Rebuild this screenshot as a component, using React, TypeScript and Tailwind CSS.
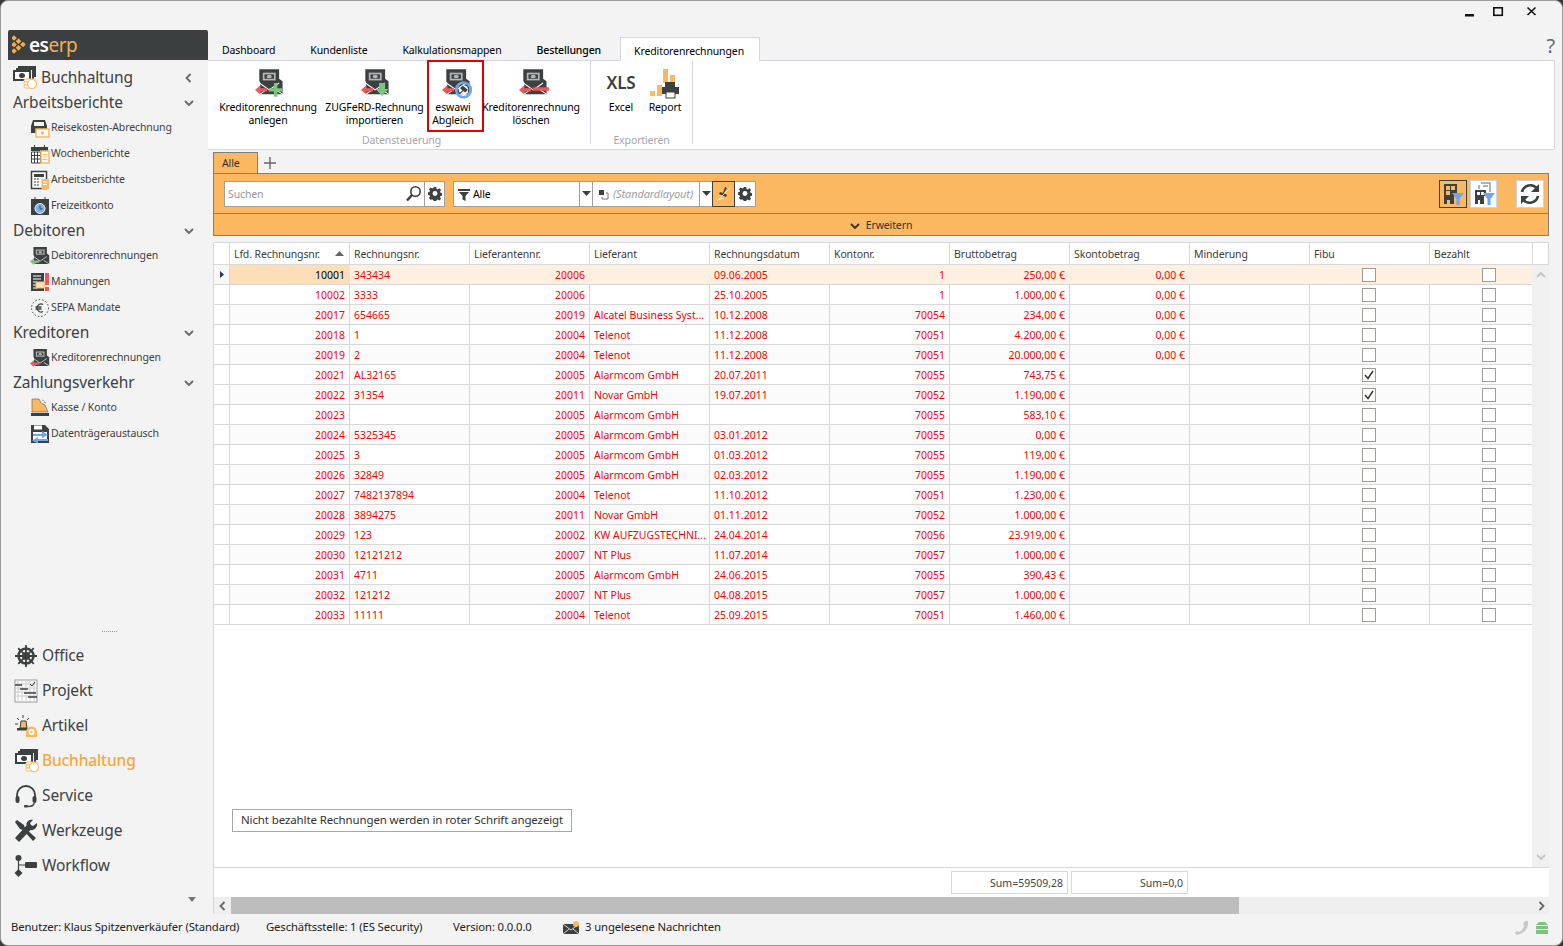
import type { ReactNode } from 'react';

const DARK = '#3b4040';
const ORANGE = '#fbb860';
const BLUE = '#6ea6f5';
const GREEN = '#7cc47f';
const RED = '#f2555a';

function Bills({ color = ORANGE }: { color?: string }) {
  return (
    <svg width="26" height="26" viewBox="0 0 26 26">
      <path d="M6 1h18v11h-2V3H6z" fill={DARK} />
      <path d="M4 3h18v11h-2V5H4z" fill={DARK} />
      <rect x="1" y="5" width="18" height="11" fill={DARK} />
      <rect x="3" y="7" width="14" height="7" fill="#fff" />
      <ellipse cx="10" cy="10.5" rx="3" ry="2.5" fill={DARK} />
      <rect x="12" y="14" width="12" height="3" rx="1.5" fill="#fff" stroke={color} />
      <rect x="12" y="17" width="12" height="3" rx="1.5" fill="#fff" stroke={color} />
      <rect x="12" y="20" width="12" height="3" rx="1.5" fill="#fff" stroke={color} />
      <circle cx="20" cy="19" r="4.5" fill="#fff" stroke={color} />
    </svg>
  );
}

function InvoiceBody({ bg = '#f3f3f3' }: { bg?: string }) {
  return (
    <g>
      <path d="M5 0h23v11l4 3v15H6V15l-1-1z" fill={DARK} />
      <rect x="9" y="4" width="15" height="9" fill="#b5b5b5" />
      <rect x="11" y="6" width="11" height="5" fill={DARK} />
      <ellipse cx="16.5" cy="8.5" rx="3" ry="2" fill="#b5b5b5" />
      <path d="M5 16l11.5 8L28 16" fill="none" stroke={bg} strokeWidth="1.2" />
      <path d="M6 29l8-6M32 29l-9-6" fill="none" stroke={bg} strokeWidth="1.2" />
    </g>
  );
}

function RibbonInvoice({ kind }: { kind: 'add' | 'import' | 'sync' | 'delete' }) {
  return (
    <svg width="31" height="32" viewBox="0 0 36 34" className="ml-[4px]">
      <g transform="translate(0 1)">
        <InvoiceBody bg="#ffffff" />
      </g>
      <path d="M0 25l6-5v3h8v4H6v3z" fill={RED} />
      {kind === 'add' && <path d="M22 17h4v6h6v4h-6v6h-4v-6h-6v-4h6z" fill={GREEN} />}
      {kind === 'import' && <path d="M21 17h7v7h4l-7.5 8L17 24h4z" fill={GREEN} />}
      {kind === 'delete' && <rect x="16" y="22" width="19" height="4" fill={RED} />}
      {kind === 'sync' && (
        <g>
          <circle cx="25" cy="25" r="8.5" fill="none" stroke={BLUE} strokeWidth="3" />
          <circle cx="25" cy="25" r="5.5" fill="#fff" />
          <path d="M21 29l5-5M24 21l5 4-2 2-5-4z" stroke={DARK} strokeWidth="1.5" fill={DARK} />
        </g>
      )}
    </svg>
  );
}

function SmallInvoice({ arrow }: { arrow: string }) {
  return (
    <svg width="20" height="22" viewBox="0 0 36 36">
      <g transform="translate(1 2) scale(1.05)">
        <InvoiceBody />
      </g>
      <path d="M0 28l7-6v4h10v4H7v4z" fill={arrow} />
    </svg>
  );
}

function Cog({ size = 16 }: { size?: number }) {
  return (
    <svg width={size} height={size} viewBox="0 0 16 16">
      <path
        d="M6.6 0h2.800l.4 2.200 1.300.6 1.900-1.300 2 2-1.300 1.900.6 1.300 2.200.4v2.800l-2.200.4-.6 1.300 1.300 1.900-2 2-1.900-1.300-1.300.6-.4 2.200H6.600l-.4-2.200-1.300-.6L3 14.500l-2-2 1.300-1.900-.6-1.300L-.5 8.900V6.100l2.200-.4.6-1.300L1 2.500l2-2 1.900 1.300 1.300-.6z"
        fill={DARK}
      />
      <circle cx="8" cy="7.5" r="2.8" fill="#fff" />
    </svg>
  );
}

function Chevron({ dir, color = '#666' }: { dir: 'left' | 'down' | 'up' | 'right'; color?: string }) {
  const d = {
    left: 'M6.5 1L2.5 5l4 4',
    right: 'M3.5 1l4 4-4 4',
    down: 'M1 3l4 4 4-4',
    up: 'M1 7l4-4 4 4',
  }[dir];
  return (
    <svg width="10" height="10" viewBox="0 0 10 10">
      <path d={d} fill="none" stroke={color} strokeWidth="1.8" />
    </svg>
  );
}

function Caret() {
  return (
    <svg width="9" height="5" viewBox="0 0 9 5">
      <path d="M0 0h9L4.5 5z" fill={DARK} />
    </svg>
  );
}

const sideIcons: Record<string, ReactNode> = {
  reise: (
    <svg width="20" height="20" viewBox="0 0 20 20">
      <path d="M3 2h12l2 6v7H1V8z" fill={DARK} />
      <rect x="4" y="4" width="10" height="4" fill="#f3f3f3" />
      <rect x="6" y="11" width="13" height="8" fill="#fff" stroke={ORANGE} strokeWidth="1.5" />
      <circle cx="12.5" cy="15" r="1.8" fill={ORANGE} />
    </svg>
  ),
  woche: (
    <svg width="20" height="20" viewBox="0 0 20 20">
      <path d="M1 3h17v4H1z" fill={DARK} />
      <path d="M4 1h1v3H4zM14 1h1v3h-1z" fill={DARK} />
      <path d="M1.5 8h9v11h-9zM1.5 11.5h9M1.5 15h9M4.5 8v11M7.5 8v11" fill="#fff" stroke={DARK} />
      <rect x="11" y="7" width="8" height="12" fill="#fff" stroke={ORANGE} strokeWidth="1.5" />
      <path d="M12.5 10.5h5M12.5 13h5M12.5 15.5h5" stroke={ORANGE} />
    </svg>
  ),
  arbeit: (
    <svg width="20" height="20" viewBox="0 0 20 20">
      <rect x="1.5" y="1.5" width="15" height="17" fill="#fff" stroke={DARK} strokeWidth="1.5" />
      <rect x="4" y="4" width="10" height="3" fill={DARK} />
      <path d="M4 9h6M4 12h6M4 15h6" stroke={DARK} strokeDasharray="2 1" />
      <rect x="11.5" y="9" width="7.5" height="10" fill={ORANGE} />
      <path d="M13 12h4M13 14.5h4" stroke="#fff" />
    </svg>
  ),
  frei: (
    <svg width="20" height="20" viewBox="0 0 20 20">
      <rect x="1" y="3" width="18" height="16" fill={DARK} />
      <path d="M4.500 1h1v3h-1zM14.500 1h1v3h-1z" fill={DARK} />
      <circle cx="10" cy="12.5" r="5" fill="#7fb0f0" stroke="#fff" />
      <path d="M10 9.5v3.5h2.500" stroke={DARK} fill="none" />
    </svg>
  ),
  mahn: (
    <svg width="20" height="20" viewBox="0 0 20 20">
      <rect x="1" y="1" width="13" height="18" fill={DARK} />
      <path d="M3 4h8M3 7h8M3 10h4M3 13h4M3 16h4" stroke="#fff" />
      <rect x="6" y="10" width="9" height="6" fill="#fde2bd" stroke={ORANGE} />
      <rect x="15" y="1" width="4" height="12" fill={RED} />
      <rect x="15" y="15" width="4" height="4" fill={RED} />
    </svg>
  ),
  sepa: (
    <svg width="20" height="20" viewBox="0 0 20 20">
      <circle cx="10" cy="10" r="8.5" fill="none" stroke={DARK} strokeDasharray="1.5 2" />
      <path d="M13 6.500a4 4 0 1 0 0 7M5.500 9h6M5.500 11h6" fill="none" stroke={DARK} strokeWidth="1.3" />
    </svg>
  ),
  kasse: (
    <svg width="20" height="20" viewBox="0 0 20 20">
      <path d="M2 1h7l2 4 4 2 3 7H2z" fill={ORANGE} stroke={DARK} strokeWidth=".5" />
      <rect x="1" y="15" width="18" height="3" fill={DARK} />
      <path d="M12 2l2 1M14 4l2 1" stroke="#999" />
    </svg>
  ),
  daten: (
    <svg width="20" height="20" viewBox="0 0 20 20">
      <path d="M1 1h14l4 4v14H1z" fill={DARK} />
      <rect x="4" y="1.5" width="8" height="4" fill="#fff" />
      <rect x="3" y="8" width="14" height="9" fill="#fff" />
      <path d="M3 10h9V7l6 4-6 3v-2H3z" fill={BLUE} />
      <path d="M18 15H8v-2l-6 3.500L8 19.500V17h10z" fill={BLUE} />
    </svg>
  ),
};

const navIcons: Record<string, ReactNode> = {
  Office: (
    <svg width="24" height="24" viewBox="0 0 24 24">
      <circle cx="12" cy="12" r="7.5" fill="none" stroke={DARK} strokeWidth="2.5" />
      <circle cx="12" cy="12" r="4" fill={DARK} />
      <path d="M12 1v22M1 12h22M4.200 4.200l15.600 15.600M19.800 4.200L4.200 19.800" stroke={DARK} strokeWidth="1.8" />
    </svg>
  ),
  Projekt: (
    <svg width="24" height="24" viewBox="0 0 24 24">
      <rect x="1" y="1" width="22" height="22" fill="#fff" stroke="#9a9a9a" />
      <path d="M4 1v22M8 1v22M12 1v22M16 1v22M20 1v22M1 5h22M1 9h22M1 13h22M1 17h22" stroke="#ccc" />
      <path d="M1 6h7M6 10h8M10 14h12M14 18h9" stroke={DARK} strokeWidth="1.6" />
      <path d="M16 5l2 2 3-4" fill="none" stroke={DARK} />
    </svg>
  ),
  Artikel: (
    <svg width="24" height="24" viewBox="0 0 24 24">
      <path d="M7 7h5l1 7H6z" fill={ORANGE} stroke={DARK} />
      <rect x="3" y="14" width="11" height="2.5" fill={DARK} />
      <path d="M9 1v3M3 4l2 2M15 4l-2 2M1 10h3" stroke={DARK} />
      <path d="M13 23v-5a5.500 5.500 0 0 1 11 0v5z" fill={ORANGE} transform="translate(-1 0)" />
      <circle cx="17.5" cy="18" r="3" fill="#fff" />
      <circle cx="17.5" cy="18" r="1.2" fill={ORANGE} />
    </svg>
  ),
  Buchhaltung: <Bills />,
  Service: (
    <svg width="24" height="24" viewBox="0 0 24 24">
      <path d="M3 15v-4a9 9 0 0 1 18 0v4" fill="none" stroke={DARK} strokeWidth="1.8" />
      <rect x="1.5" y="12" width="4" height="7" rx="2" fill={DARK} />
      <rect x="18.5" y="12" width="4" height="7" rx="2" fill={DARK} />
      <path d="M20 19c0 3-3 3.500-6 3.500" fill="none" stroke={DARK} strokeWidth="1.5" />
      <rect x="10" y="21" width="4" height="2.5" rx="1" fill={DARK} />
    </svg>
  ),
  Werkzeuge: (
    <svg width="24" height="24" viewBox="0 0 24 24">
      <path d="M3 1L1 3l5 7 3 1 10 11 3-3L11 9l-1-3z" fill={DARK} />
      <path d="M23 4l-4 3-2-1-1-2 3-3c-4-1-7 2-6.500 5.500L1 19l4 4L16.500 11C20 12 24 8 23 4z" fill={DARK} />
    </svg>
  ),
  Workflow: (
    <svg width="24" height="24" viewBox="0 0 24 24">
      <circle cx="4.500" cy="4" r="3" fill={DARK} />
      <path d="M4.500 6v13M4.500 11H12" stroke={DARK} strokeWidth="1.2" />
      <rect x="11" y="8" width="12" height="6" rx="1" fill={DARK} />
      <path d="M4.500 15l4 4-4 4-4-4z" fill={DARK} />
    </svg>
  ),
};

const groups = [
  {
    title: 'Arbeitsberichte',
    items: [
      ['Reisekosten-Abrechnung', 'reise'],
      ['Wochenberichte', 'woche'],
      ['Arbeitsberichte', 'arbeit'],
      ['Freizeitkonto', 'frei'],
    ],
  },
  {
    title: 'Debitoren',
    items: [
      ['Debitorenrechnungen', 'deb'],
      ['Mahnungen', 'mahn'],
      ['SEPA Mandate', 'sepa'],
    ],
  },
  { title: 'Kreditoren', items: [['Kreditorenrechnungen', 'kred']] },
  {
    title: 'Zahlungsverkehr',
    items: [
      ['Kasse / Konto', 'kasse'],
      ['Datenträgeraustausch', 'daten'],
    ],
  },
];

function Sidebar() {
  return (
    <aside className="w-[207px] shrink-0 flex flex-col pl-[7px] pb-[5px]">
      <div className="h-[30px] bg-[#3b3f3f] rounded-t-[2px] flex items-center pl-[4px] shrink-0">
        <svg width="15" height="20" viewBox="0 0 15 20">
          {[[2, 3], [2, 9.5], [2, 16], [6.5, 6.2], [6.5, 12.8], [11, 9.5]].map(([x, y]) => (
            <rect key={`${x}-${y}`} x={x - 2} y={y - 2} width="4" height="4" fill="#f6a94f" transform={`rotate(45 ${x} ${y})`} />
          ))}
        </svg>
        <span className="ml-[2px] text-[19px] leading-none font-semibold text-white tracking-[-0.5px]">
          es<span className="text-[#f6ad55] font-normal">erp</span>
        </span>
      </div>

      <div className="flex-1 mt-[5px] text-[#3d4242]">
        <div className="h-[25px] flex items-center">
          <span className="ml-[4px] w-[29px]">
            <Bills />
          </span>
          <span className="text-[15.5px] flex-1">Buchhaltung</span>
          <span className="mr-[14px]">
            <Chevron dir="left" />
          </span>
        </div>
        {groups.map(g => (
          <div key={g.title} className="-mb-[1px]">
            <div className="h-[25px] flex items-center pl-[5px]">
              <span className="text-[15.5px] flex-1">{g.title}</span>
              <span className="mr-[14px]">
                <Chevron dir="down" />
              </span>
            </div>
            {g.items.map(([label, icon]) => (
              <div key={label} className="h-[26px] flex items-center pl-[20px] text-[10.5px]">
                <span className="w-[23px] flex justify-center">
                  {icon === 'deb' && <SmallInvoice arrow={GREEN} />}
                  {icon === 'kred' && <SmallInvoice arrow={RED} />}
                  {sideIcons[icon]}
                </span>
                {label}
              </div>
            ))}
          </div>
        ))}
      </div>

      <div className="text-[#3d4242]">
        <div className="h-[3px] mb-[4px] flex justify-center pl-[2px] text-[0px]">
          <span className="w-[15px] border-t border-dotted border-[#999]" />
        </div>
        {['Office', 'Projekt', 'Artikel', 'Buchhaltung', 'Service', 'Werkzeuge', 'Workflow'].map(n => (
          <div key={n} className="h-[35px] flex items-center pl-[6px]">
            <span className="w-[28px] flex">{navIcons[n]}</span>
            <span className={`text-[15.5px] ${n === 'Buchhaltung' ? 'text-[#f9a63a] font-medium' : ''}`}>{n}</span>
          </div>
        ))}
        <div className="h-[20px] mt-[6px] flex justify-end items-center pr-[12px]">
          <svg width="8" height="5" viewBox="0 0 8 5">
            <path d="M0 0h8L4 5z" fill="#777" />
          </svg>
        </div>
      </div>
    </aside>
  );
}

const tabs = ['Dashboard', 'Kundenliste', 'Kalkulationsmappen', 'Bestellungen'];

function RibbonItem({ w, icon, lines, box, textPad = '' }: { w: string; icon: ReactNode; lines: string[]; box?: boolean; textPad?: string }) {
  return (
    <div className={`${w} h-[70px] flex flex-col items-center pt-[3px] text-[10.5px] leading-[13px] text-black text-center ${box ? 'outline-2 -outline-offset-1 outline-[#e60000]' : ''}`}>
      <div className="h-[35px] flex items-end justify-center">{icon}</div>
      <div className={`mt-[2px] whitespace-nowrap ${textPad}`}>{lines[0]}</div>
      <div className={`whitespace-nowrap ${textPad}`}>{lines[1]}</div>
    </div>
  );
}

function Ribbon() {
  return (
    <div className="h-[90px] mr-[7px] bg-white border border-[#d6d6e2] border-l-0 flex pl-[7px] shrink-0">
      <div className="w-[376px] flex flex-col items-center border-r border-[#d6d6e2] mb-[5px]">
        <div className="flex w-full">
          <RibbonItem w="w-[106px]" icon={<RibbonInvoice kind="add" />} lines={['Kreditorenrechnung', 'anlegen']} />
          <RibbonItem w="w-[107px]" icon={<RibbonInvoice kind="import" />} lines={['ZUGFeRD-Rechnung', 'importieren']} />
          <RibbonItem w="w-[55px]" box textPad="pr-[5px]" icon={<RibbonInvoice kind="sync" />} lines={['eswawi', 'Abgleich']} />
          <RibbonItem w="w-[98px]" textPad="pr-[2px]" icon={<RibbonInvoice kind="delete" />} lines={['Kreditorenrechnung', 'löschen']} />
        </div>
        <div className="mt-[2px] text-[10.5px] leading-[14px] text-[#a6a6ae] pr-[2px]">Datensteuerung</div>
      </div>
      <div className="w-[102px] flex flex-col items-center border-r border-[#d6d6e2] mb-[5px]">
        <div className="flex w-full pl-[8px]">
          <RibbonItem
            w="w-[44px]"
            icon={<span className="text-[17px] leading-[28px] font-semibold text-[#3b4040] mb-[2px]">XLS</span>}
            lines={['Excel', '']}
          />
          <RibbonItem
            w="w-[44px]"
            icon={
              <svg width="32" height="32" viewBox="0 0 32 32">
                <path d="M1 24h5v5H1zM8 18h5v11H8zM14 2h5v14h-5zM21 8h5v8h-5z" fill={ORANGE} />
                <rect x="16" y="15" width="10" height="5" fill={DARK} />
                <rect x="13" y="20" width="17" height="7" fill={DARK} />
                <rect x="17" y="25" width="9" height="6" fill="#fff" stroke={DARK} />
              </svg>
            }
            lines={['Report', '']}
          />
        </div>
        <div className="mt-[2px] text-[10.5px] leading-[14px] text-[#a6a6ae]">Exportieren</div>
      </div>
    </div>
  );
}

function Toolbar() {
  return (
    <div className="h-[41px] border border-[#7f7f7f] bg-[#fcb860] flex items-center pl-[10px] pr-[4px]">
      <div className="flex h-[26px] bg-white border border-[#a0a0a0] w-[221px]">
        <div className="flex-1 flex items-center pl-[3px] pt-[2px] text-[10.5px] text-[#999]">Suchen</div>
        <div className="flex items-center pr-[2px]">
          <svg width="17" height="17" viewBox="0 0 17 17">
            <circle cx="10.5" cy="6.5" r="4.7" fill="none" stroke={DARK} strokeWidth="1.6" />
            <path d="M7 10l-5 5.500" stroke={DARK} strokeWidth="2.6" />
          </svg>
        </div>
        <div className="w-[20px] border-l border-[#a0a0a0] flex items-center justify-center">
          <Cog size={14} />
        </div>
      </div>
      <div className="flex h-[26px] ml-[8px] bg-white border border-[#a0a0a0] w-[303px] text-[10.5px]">
        <div className="w-[125px] flex items-center pl-[4px] pt-[2px] text-black">
          <svg width="12" height="12" viewBox="0 0 12 12" className="mr-[3px]">
            <path d="M0 0h12v2H0zM1 3h10L7.5 7v5l-3-1.500V7z" fill={DARK} />
          </svg>
          Alle
        </div>
        <div className="w-[14px] border-x border-[#a0a0a0] flex items-center justify-center">
          <Caret />
        </div>
        <div className="w-[106px] flex items-center pl-[5px] pt-[2px] text-[11px] text-[#a0a0a0] italic whitespace-nowrap overflow-hidden">
          <svg width="11" height="11" viewBox="0 0 11 11" className="mr-[4px] shrink-0">
            <rect x="1" y="1" width="5" height="5" fill={DARK} />
            <path d="M8 4h2v6H4V8" fill="none" stroke="#777" />
          </svg>
          (Standardlayout)
        </div>
        <div className="w-[14px] border-x border-[#a0a0a0] flex items-center justify-center">
          <Caret />
        </div>
        <div className="w-[21px] bg-[#fcb860] outline outline-[#3b4040] flex items-center justify-center">
          <svg width="16" height="16" viewBox="0 0 16 16">
            <path d="M9 1l2 1-3 5 3 2-1 2-7-3 1-2 3 1z" fill={DARK} />
            <path d="M1 15l13-13" stroke="#fff" strokeWidth=".8" />
            <path d="M3 14c2-2 4-1 5-2" stroke="#fff" fill="none" />
          </svg>
        </div>
        <div className="flex-1 flex items-center justify-center">
          <Cog size={14} />
        </div>
      </div>
      <div className="ml-auto flex items-center">
        <div className="w-[28px] h-[28px] border border-[#3b4040] bg-[#fcb860] flex items-center justify-center">
          <svg width="24" height="24" viewBox="0 0 24 24">
            <path d="M3 2h13v12h-3v8H9v-4H6v4H3z" fill={DARK} />
            <path d="M5 4h4v4H5zM10 4h4v4h-4zM5 9h4v4H5z" fill="#fcb860" />
            <path d="M11 11h12l-4.500 6v6h-3v-6z" fill={BLUE} />
          </svg>
        </div>
        <div className="ml-[3px] w-[27px] h-[28px] bg-white border border-[#c8d4ea] flex items-center justify-center">
          <svg width="24" height="24" viewBox="0 0 24 24">
            <path d="M9 1h9v9M7 3v4M11 4h5" fill="none" stroke="#999" strokeWidth="1.5" />
            <path d="M3 8h11v6h-2v8H8v-4H6v4H3z" fill={DARK} />
            <path d="M5 10h3v3H5zM9 10h3v3H9z" fill="#fff" />
            <path d="M11 11h12l-4.500 6v6h-3v-6z" fill={BLUE} />
          </svg>
        </div>
        <div className="ml-[19px] w-[28px] h-[28px] bg-white border border-[#c8d4ea] flex items-center justify-center">
          <svg width="24" height="24" viewBox="0 0 24 24">
            <path d="M4 10a8.500 8.500 0 0 1 15-3.500" fill="none" stroke={DARK} strokeWidth="2.6" />
            <path d="M21 2v8h-8z" fill={DARK} />
            <path d="M20 14a8.500 8.500 0 0 1-15 3.500" fill="none" stroke={DARK} strokeWidth="2.6" />
            <path d="M3 22v-8h8z" fill={DARK} />
          </svg>
        </div>
      </div>
    </div>
  );
}

const cols = ['Lfd. Rechnungsnr.', 'Rechnungsnr.', 'Lieferantennr.', 'Lieferant', 'Rechnungsdatum', 'Kontonr.', 'Bruttobetrag', 'Skontobetrag', 'Minderung', 'Fibu', 'Bezahlt'];

// lfd, nr, lieferantennr, lieferant, datum, konto, brutto, skonto, fibu
type Row = [string, string, string, string, string, string, string, string, boolean?];
const rows: Row[] = [
  ['10001', '343434', '20006', '', '09.06.2005', '1', '250,00 €', '0,00 €'],
  ['10002', '3333', '20006', '', '25.10.2005', '1', '1.000,00 €', '0,00 €'],
  ['20017', '654665', '20019', 'Alcatel Business Syst...', '10.12.2008', '70054', '234,00 €', '0,00 €'],
  ['20018', '1', '20004', 'Telenot', '11.12.2008', '70051', '4.200,00 €', '0,00 €'],
  ['20019', '2', '20004', 'Telenot', '11.12.2008', '70051', '20.000,00 €', '0,00 €'],
  ['20021', 'AL32165', '20005', 'Alarmcom GmbH', '20.07.2011', '70055', '743,75 €', '', true],
  ['20022', '31354', '20011', 'Novar GmbH', '19.07.2011', '70052', '1.190,00 €', '', true],
  ['20023', '', '20005', 'Alarmcom GmbH', '', '70055', '583,10 €', ''],
  ['20024', '5325345', '20005', 'Alarmcom GmbH', '03.01.2012', '70055', '0,00 €', ''],
  ['20025', '3', '20005', 'Alarmcom GmbH', '01.03.2012', '70055', '119,00 €', ''],
  ['20026', '32849', '20005', 'Alarmcom GmbH', '02.03.2012', '70055', '1.190,00 €', ''],
  ['20027', '7482137894', '20004', 'Telenot', '11.10.2012', '70051', '1.230,00 €', ''],
  ['20028', '3894275', '20011', 'Novar GmbH', '01.11.2012', '70052', '1.000,00 €', ''],
  ['20029', '123', '20002', 'KW AUFZUGSTECHNI...', '24.04.2014', '70056', '23.919,00 €', ''],
  ['20030', '12121212', '20007', 'NT Plus', '11.07.2014', '70057', '1.000,00 €', ''],
  ['20031', '4711', '20005', 'Alarmcom GmbH', '24.06.2015', '70055', '390,43 €', ''],
  ['20032', '121212', '20007', 'NT Plus', '04.08.2015', '70057', '1.000,00 €', ''],
  ['20033', '11111', '20004', 'Telenot', '25.09.2015', '70051', '1.460,00 €', ''],
];

function Check({ on }: { on?: boolean }) {
  return (
    <span className="w-[14px] h-[14px] -ml-[2px] -mt-[2px] bg-white border border-[#a09c98] flex items-center justify-center">
      {on && (
        <svg width="10" height="10" viewBox="0 0 10 10">
          <path d="M1 5l3 3.5L9 1" fill="none" stroke="#333" strokeWidth="1.5" />
        </svg>
      )}
    </span>
  );
}

function Grid() {
  return (
    <div className="mt-[6px] mr-[13px] flex-1 min-h-0 flex flex-col bg-white border-l border-[#d8d8d8] text-[10.5px]">
      <div className="h-[23px] flex border-y border-[#d8d8d8] text-[#3c3c3c] shrink-0 bg-white">
        <div className="w-[16px] border-r border-[#d8d8d8]" />
        {cols.map((c, i) => (
          <div key={c} className={`${i === 10 ? 'w-[103px]' : 'w-[120px]'} border-r border-[#d8d8d8] pl-1 pt-[2px] flex items-center justify-between pr-[5px]`}>
            {c}
            {i === 0 && (
              <svg width="9" height="5" viewBox="0 0 9 5" className="-mt-[2px]">
                <path d="M0 5h9L4.5 0z" fill="#666" />
              </svg>
            )}
          </div>
        ))}
        <div className="flex-1 border-r border-[#d8d8d8]" />
      </div>
      <div className="flex-1 flex min-h-0">
        <div className="w-[1319px] flex flex-col overflow-hidden tracking-normal">
          {rows.map((r, idx) => {
            const sel = idx === 0;
            const rowBg = sel ? 'bg-[#fdf0e1]' : idx % 2 === 0 ? 'bg-[#fafafa]' : 'bg-white';
            const cell = `w-[120px] shrink-0 border-r border-[#d8d8d8] px-1 pt-[2px] flex items-center ${sel ? 'border-r-transparent' : ''}`;
            return (
              <div key={r[0]} className={`h-[20px] flex border-b border-[#d8d8d8] text-[#ff0000] shrink-0 ${rowBg}`}>
                <div className={`w-[16px] shrink-0 border-r border-[#d8d8d8] flex items-center justify-center ${sel ? 'bg-[#f7f7f7]' : 'bg-white'}`}>
                  {sel && (
                    <svg width="4" height="7" viewBox="0 0 4 7">
                      <path d="M0 0l4 3.500L0 7z" fill="#1f3a68" />
                    </svg>
                  )}
                </div>
                <div className={`${cell} justify-end ${sel ? 'bg-[#fcdfb6] text-black' : ''}`}>{r[0]}</div>
                <div className={cell}>{r[1]}</div>
                <div className={`${cell} justify-end`}>{r[2]}</div>
                <div className={`${cell} whitespace-nowrap`}>{r[3]}</div>
                <div className={cell}>{r[4]}</div>
                <div className={`${cell} justify-end`}>{r[5]}</div>
                <div className={`${cell} justify-end`}>{r[6]}</div>
                <div className={`${cell} justify-end`}>{r[7]}</div>
                <div className={cell} />
                <div className={`${cell} justify-center`}>
                  <Check on={r[8]} />
                </div>
                <div className={`${cell} justify-center`}>
                  <Check />
                </div>
              </div>
            );
          })}
          <div className="mt-[184px] ml-[18px] w-[340px] h-[23px] border border-[#a8a8a8] flex items-center pl-2 pb-[1px] text-[11.5px] tracking-[-0.12px] whitespace-nowrap text-[#333] shrink-0">
            Nicht bezahlte Rechnungen werden in roter Schrift angezeigt
          </div>
        </div>
        <div className="w-[17px] bg-[#f0f0f0] flex flex-col items-center justify-between py-[5px]">
          <Chevron dir="up" color="#c4c4c4" />
          <Chevron dir="down" color="#c4c4c4" />
        </div>
      </div>
      <div className="h-[30px] border-t border-[#d8d8d8] flex items-center pl-[737px] shrink-0 text-[#444] tracking-normal">
        <div className="w-[117px] h-[23px] border border-[#d8d8d8] flex items-center justify-end pr-1 pt-[2px]">Sum=59509,28</div>
        <div className="w-[117px] h-[23px] ml-[3px] border border-[#d8d8d8] flex items-center justify-end pr-1 pt-[2px]">Sum=0,0</div>
      </div>
      <div className="h-[17px] bg-[#efefef] flex shrink-0">
        <div className="w-[17px] flex items-center justify-center">
          <Chevron dir="left" />
        </div>
        <div className="w-[1008px] bg-[#bdbdbd]" />
        <div className="flex-1 flex items-center justify-end pr-[3px]">
          <Chevron dir="right" />
        </div>
      </div>
    </div>
  );
}

export default function App() {
  return (
    <div className="w-[1563px] h-[946px] bg-[#3a3a3a] overflow-hidden font-['Noto_Sans','Open_Sans',sans-serif] tracking-[-0.12px]">
      <div className="w-full h-full bg-[#f3f3f3] rounded-[8px] border border-[#9c9c9c] flex flex-col box-border">
        {/* Title bar */}
        <div className="h-[29px] flex items-start shrink-0 text-black">
          <div className="ml-auto flex pt-[5px] pr-[24px]">
            <svg width="12" height="12" viewBox="0 0 12 12" className="mr-[16px]">
              <rect x="1" y="8" width="9" height="2.5" fill="#111" />
            </svg>
            <svg width="12" height="12" viewBox="0 0 12 12" className="mr-[22px]">
              <rect x="1.8" y="1.8" width="8.5" height="7.5" fill="none" stroke="#111" strokeWidth="1.6" />
            </svg>
            <svg width="12" height="12" viewBox="0 0 12 12">
              <path d="M1.5 1.5l8 7.500M9.500 1.500l-8 7.500" stroke="#111" strokeWidth="1.6" />
            </svg>
          </div>
        </div>

        <div className="flex-1 flex min-h-0">
          <Sidebar />
          <main className="flex-1 min-w-0 flex flex-col">
            {/* Ribbon tabs */}
            <div className="h-[30px] flex items-end pr-[6px] text-[10.5px] text-black shrink-0">
              {tabs.map(t => (
                <div key={t} className={`h-[23px] pt-[4px] px-[14px] flex items-center ${t === 'Bestellungen' ? 'font-medium mr-[5px]' : 'mr-[7px]'}`}>{t}</div>
              ))}
              <div className="h-[24px] -mb-[1px] pt-[4px] pl-[13px] z-10 w-[140px] bg-white border border-b-0 border-[#d6d6e2] flex items-center">Kreditorenrechnungen</div>
              <div className="ml-auto pb-[2px] pr-[1px] text-[20px] leading-[24px] text-[#666]">?</div>
            </div>
            <Ribbon />

            <div className="pl-[5px] flex-1 min-h-0 flex flex-col">
              {/* Doc tabs */}
              <div className="h-[21px] mt-[2px] flex items-end shrink-0">
                <div className="w-[45px] h-[21px] pt-[1px] bg-[#fcb860] border border-b-0 border-[#7f7f7f] flex items-center pl-2 text-[10.5px] text-[#333]">Alle</div>
                <svg width="14" height="14" viewBox="0 0 14 14" className="ml-[5px] mb-[3px]">
                  <path d="M7 1v12M1 7h12" stroke="#666" strokeWidth="1.4" />
                </svg>
              </div>
              <div className="mr-[13px] shrink-0">
                <Toolbar />
                <div className="h-[22px] pt-[2px] border border-t-0 border-[#7f7f7f] bg-[#fcb860] flex items-center justify-center text-[10.5px] text-[#333]">
                  <span className="mr-[6px] flex">
                    <Chevron dir="down" color="#333" />
                  </span>
                  Erweitern
                </div>
              </div>
              <Grid />
            </div>
          </main>
        </div>

        {/* Status bar */}
        <div className="h-[31px] shrink-0 flex items-center pl-[10px] pr-[14px] pb-[4px] text-[11.3px] text-[#222]">
          <span className="w-[255px]">Benutzer: Klaus Spitzenverkäufer (Standard)</span>
          <span className="w-[187px]">Geschäftsstelle: 1 (ES Security)</span>
          <span className="w-[110px]">Version: 0.0.0.0</span>
          <svg width="17" height="14" viewBox="0 0 17 14" className="mr-[5px]">
            <path d="M0 3h16v10H0z" fill={DARK} />
            <path d="M0 3l8 6 8-6M0 13l6-5M16 13l-6-5" fill="none" stroke="#fff" strokeWidth=".8" />
            <circle cx="13" cy="3" r="3" fill={ORANGE} />
          </svg>
          <span>3 ungelesene Nachrichten</span>
          <div className="ml-auto flex items-center gap-[6px]">
            <svg width="16" height="16" viewBox="0 0 16 16">
              <path d="M14 1c1 7-4 13-12 14l-1-3 3-1 1 1c3-1 5-4 5-7l-1-1 2-3z" fill="#c8c8c8" />
            </svg>
            <svg width="12" height="14" viewBox="0 0 12 14">
              <path d="M3 1h6l3 3H0z" fill={GREEN} />
              <rect y="5" width="12" height="3" fill={GREEN} />
              <rect y="9" width="12" height="4" fill={GREEN} />
            </svg>
          </div>
        </div>
      </div>
    </div>
  );
}
